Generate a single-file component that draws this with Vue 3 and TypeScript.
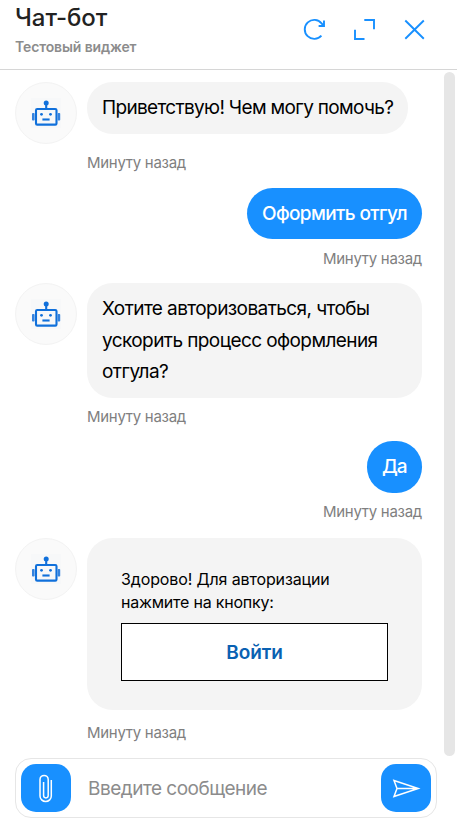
<script setup lang="ts">
import { ref } from 'vue'

interface Message {
  id: number
  author: 'bot' | 'user'
  lines: string[]
  time: string
  action?: string
}

const draft = ref('')

const messages: Message[] = [
  { id: 1, author: 'bot', lines: ['Приветствую! Чем могу помочь?'], time: 'Минуту назад' },
  { id: 2, author: 'user', lines: ['Оформить отгул'], time: 'Минуту назад' },
  {
    id: 3,
    author: 'bot',
    lines: ['Хотите авторизоваться, чтобы', 'ускорить процесс оформления', 'отгула?'],
    time: 'Минуту назад',
  },
  { id: 4, author: 'user', lines: ['Да'], time: 'Минуту назад' },
  {
    id: 5,
    author: 'bot',
    lines: ['Здорово! Для авторизации', 'нажмите на кнопку:'],
    time: 'Минуту назад',
    action: 'Войти',
  },
]
</script>

<template>
  <div class="widget">
    <header class="header">
      <div class="titles">
        <h1 class="title"><span>Чат-бот</span></h1>
        <p class="subtitle"><span>Тестовый виджет</span></p>
      </div>
      <div class="tools">
        <button class="tool" aria-label="Обновить">
          <svg width="24" height="24" viewBox="0 0 24 24">
            <path d="M19.4 18.6A9.5 9.5 0 1 1 19.6 6.3L21.6 8.8M22 3.5V9H16.6" />
          </svg>
        </button>
        <button class="tool" aria-label="Развернуть">
          <svg width="24" height="24" viewBox="0 0 24 24">
            <path d="M12.3 3H22V12.3M3 12.7V22H12.5" />
          </svg>
        </button>
        <button class="tool" aria-label="Закрыть">
          <svg width="24" height="24" viewBox="0 0 24 24">
            <path d="M3.3 3.5L21.8 21.8M21.8 3.5L3.3 21.8" />
          </svg>
        </button>
      </div>
    </header>

    <div class="body">
      <main class="feed">
        <article v-for="m in messages" :key="m.id" class="message" :class="m.author">
          <div class="row">
            <div v-if="m.author === 'bot'" class="avatar">
              <svg width="30" height="30" viewBox="0 0 30 30">
                <rect class="plate" width="30" height="30" />
                <rect class="line" x="5" y="11" width="20.5" height="15.6" rx="1.2" />
                <path class="line" d="M15.2 11V5" />
                <circle class="solid" cx="15.2" cy="5" r="2.5" />
                <rect class="ear" x="1" y="15" width="2.6" height="7.5" rx="0.8" />
                <rect class="ear" x="26.6" y="15" width="2.6" height="7.5" rx="0.8" />
                <circle class="solid" cx="10.5" cy="16.3" r="1.4" />
                <circle class="solid" cx="19.5" cy="16.3" r="1.4" />
                <path class="line" d="M11.4 21.5H18.6" />
              </svg>
            </div>
            <div class="bubble" :class="{ card: m.action }">
              <p v-for="line in m.lines" :key="line" class="line-text">{{ line }}</p>
              <button v-if="m.action" class="action">{{ m.action }}</button>
            </div>
          </div>
          <div class="time"><span>{{ m.time }}</span></div>
        </article>
      </main>
      <div class="scrollbar"></div>
    </div>

    <form class="composer" @submit.prevent>
      <button class="square" type="button" aria-label="Прикрепить файл">
        <svg width="30" height="30" viewBox="0 0 30 30">
          <path d="M20.3 7V22.9A5.65 5.65 0 0 1 9 22.9V6.5A4.1 4.1 0 0 1 17.2 6.5V22.6A2.3 2.3 0 0 1 12.6 22.6V9" />
        </svg>
      </button>
      <input v-model="draft" class="input" type="text" placeholder="Введите сообщение" />
      <button class="square" type="submit" aria-label="Отправить">
        <svg width="30" height="30" viewBox="0 0 30 30">
          <path d="M3 7.5L27.2 15.5L3 23.5L6 15.5ZM6 15.5H27" />
        </svg>
      </button>
    </form>
  </div>
</template>

<style>
body {
  background: #fff;
}
</style>

<style scoped>
.widget {
  box-sizing: border-box;
  width: 457px;
  height: 826px;
  overflow: hidden;
  font-family: Inter, Roboto, sans-serif;
  color: #000;
  background: #fff;
}
button {
  padding: 0;
  border: 0;
  background: none;
  font: inherit;
}
.header {
  box-sizing: border-box;
  display: flex;
  justify-content: space-between;
  height: 70px;
  padding: 3px 31px 0 15px;
  border-bottom: 1px solid #d6d6d6;
}
.title {
  margin: 0;
  font-size: 24px;
  line-height: 30px;
  font-weight: 500;
  letter-spacing: -0.05px;
  color: #222;
}
.subtitle {
  margin: 5px 0 0;
  font-size: 14px;
  line-height: 18px;
  font-weight: 600;
  letter-spacing: -0.13px;
  color: #8c8c8c;
}
.tools {
  display: flex;
  gap: 26px;
  padding-top: 14px;
}
.tool {
  width: 24px;
  height: 24px;
}
.tool svg,
.avatar svg,
.square svg {
  display: block;
}
.tool path {
  fill: none;
  stroke: #1890ff;
  stroke-width: 1.9;
}
.body {
  display: flex;
  justify-content: space-between;
  height: 688px;
}
.feed {
  width: 407px;
  padding: 12px 0 0 15px;
}
.scrollbar {
  width: 11px;
  height: 684px;
  margin: 2px 2px 0 0;
  border-radius: 6px;
  background: #e6e6e6;
}
.row {
  display: flex;
  align-items: flex-start;
  gap: 10px;
}
.user .row {
  justify-content: flex-end;
}
.avatar {
  box-sizing: border-box;
  display: grid;
  place-items: center;
  flex: none;
  width: 62px;
  height: 62px;
  border: 1px solid #f3f3f3;
  border-radius: 50%;
  background: #fafafa;
}
.plate {
  fill: #f7f8f9;
}
.line {
  fill: none;
  stroke: #1070db;
  stroke-width: 2.1;
}
.solid {
  fill: #1070db;
}
.ear {
  fill: #3583de;
}
.bubble {
  box-sizing: border-box;
  min-height: 52px;
  padding: 10px 15px;
  border-radius: 25.5px;
  background: #f4f4f4;
  font-size: 19px;
  line-height: 31.5px;
  letter-spacing: -0.67px;
  white-space: nowrap;
}
.line-text {
  margin: 0;
}
.user .bubble {
  background: #1890ff;
  color: #fff;
  font-weight: 500;
}
.message:nth-child(1) .bubble {
  width: 321px;
}
.message:nth-child(2) .bubble {
  width: 175px;
  height: 51px;
  min-height: 51px;
  letter-spacing: -0.63px;
}
.message:nth-child(3) .bubble {
  width: 335px;
  height: 115px;
  letter-spacing: -0.58px;
}
.message:nth-child(4) .bubble {
  width: 55px;
  letter-spacing: -1px;
}
.bubble.card {
  width: 335px;
  height: 172px;
  padding: 30px 34px;
  font-size: 16px;
  line-height: 23px;
  letter-spacing: -0.13px;
}
.bubble.card .line-text + .line-text {
  letter-spacing: -0.22px;
}
.action {
  display: block;
  width: 267px;
  height: 58px;
  margin-top: 9px;
  border: 1px solid #000;
  background: #fff;
  font-size: 19px;
  font-weight: 600;
  letter-spacing: -0.1px;
  color: #0961b2;
}
.time {
  height: 44px;
  padding-left: 72px;
  box-sizing: border-box;
  font-size: 15px;
  line-height: 38px;
  letter-spacing: -0.28px;
  color: #7f7f7f;
}
.message:nth-child(2) .time {
  line-height: 39px;
}
.message:nth-child(3) .time {
  height: 43px;
}
.message:nth-child(4) .time {
  height: 45px;
}
.message:nth-child(5) .time {
  line-height: 46px;
}
.user .time {
  text-align: right;
}
.composer {
  box-sizing: border-box;
  display: flex;
  align-items: center;
  width: 422px;
  height: 60px;
  margin-left: 15px;
  padding: 0 5px;
  border: 1px solid #e6e6e6;
  border-radius: 16px;
}
.square {
  display: grid;
  place-items: center;
  flex: none;
  width: 50px;
  height: 48px;
  border-radius: 15px;
  background: #1890ff;
}
.square path {
  fill: none;
  stroke: #fff;
  stroke-width: 1.5;
  stroke-linejoin: miter;
}
.input {
  flex: 1;
  min-width: 0;
  padding: 0 17px;
  border: 0;
  outline: 0;
  background: none;
  font: 400 19px Inter, Roboto, sans-serif;
  letter-spacing: -0.5px;
}
.input::placeholder {
  color: #8c8c8c;
  opacity: 1;
}
</style>
